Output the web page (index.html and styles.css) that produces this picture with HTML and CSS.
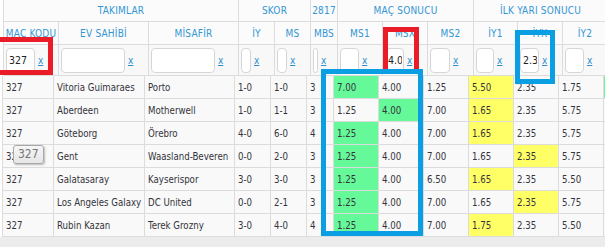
FILE: index.html
```html
<!DOCTYPE html>
<html lang="tr">
<head>
<meta charset="utf-8">
<title>Bülten</title>
<link rel="stylesheet" href="styles.css">
</head>
<body>
<div class="page">
  <div class="head">
    <div class="hc g1 span3">TAKIMLAR</div>
    <div class="hc g1 span2">SKOR</div>
    <div class="hc g1">2817</div>
    <div class="hc g1 span3">MAÇ SONUCU</div>
    <div class="hc g1 span3">İLK YARI SONUCU</div>
    <div class="hc g1"></div>

    <div class="hc g2">MAÇ KODU</div>
    <div class="hc g2">EV SAHİBİ</div>
    <div class="hc g2">MİSAFİR</div>
    <div class="hc g2">İY</div>
    <div class="hc g2">MS</div>
    <div class="hc g2">MBS</div>
    <div class="hc g2">MS1</div>
    <div class="hc g2">MSX</div>
    <div class="hc g2">MS2</div>
    <div class="hc g2">İY1</div>
    <div class="hc g2">İYX</div>
    <div class="hc g2">İY2</div>
    <div class="hc g2"></div>

    <div class="fc"><input class="fi" value="327"><a class="clr">x</a></div>
    <div class="fc"><input class="fi" value=""><a class="clr">x</a></div>
    <div class="fc"><input class="fi" value=""><a class="clr">x</a></div>
    <div class="fc"><input class="fi" value=""><a class="clr">x</a></div>
    <div class="fc"><input class="fi" value=""><a class="clr">x</a></div>
    <div class="fc"><input class="fi" value=""><a class="clr">x</a></div>
    <div class="fc"><input class="fi" value=""><a class="clr">x</a></div>
    <div class="fc"><input class="fi" value="4.0"><a class="clr">x</a></div>
    <div class="fc"><input class="fi" value=""><a class="clr">x</a></div>
    <div class="fc"><input class="fi" value=""><a class="clr">x</a></div>
    <div class="fc"><input class="fi" value="2.3"><a class="clr">x</a></div>
    <div class="fc"><input class="fi" value=""><a class="clr">x</a></div>
    <div class="fc"></div>
  </div>

  <div class="body">
    <div class="dc">327</div><div class="dc">Vitoria Guimaraes</div><div class="dc">Porto</div><div class="dc">1-0</div><div class="dc">1-0</div><div class="dc">3</div><div class="dc green">7.00</div><div class="dc">4.00</div><div class="dc">1.25</div><div class="dc yellow">5.50</div><div class="dc">2.35</div><div class="dc">1.75</div><div class="dc green"></div>
    <div class="dc">327</div><div class="dc">Aberdeen</div><div class="dc">Motherwell</div><div class="dc">1-0</div><div class="dc">1-1</div><div class="dc">3</div><div class="dc">1.25</div><div class="dc green">4.00</div><div class="dc">7.00</div><div class="dc yellow">1.65</div><div class="dc">2.35</div><div class="dc">5.75</div><div class="dc"></div>
    <div class="dc">327</div><div class="dc">Göteborg</div><div class="dc">Örebro</div><div class="dc">4-0</div><div class="dc">6-0</div><div class="dc">4</div><div class="dc green">1.25</div><div class="dc">4.00</div><div class="dc">7.00</div><div class="dc yellow">1.65</div><div class="dc">2.35</div><div class="dc">5.75</div><div class="dc"></div>
    <div class="dc">327</div><div class="dc">Gent</div><div class="dc">Waasland-Beveren</div><div class="dc">0-0</div><div class="dc">2-0</div><div class="dc">3</div><div class="dc green">1.25</div><div class="dc">4.00</div><div class="dc">7.00</div><div class="dc">1.65</div><div class="dc yellow">2.35</div><div class="dc">5.75</div><div class="dc"></div>
    <div class="dc">327</div><div class="dc">Galatasaray</div><div class="dc">Kayserispor</div><div class="dc">3-0</div><div class="dc">3-0</div><div class="dc">3</div><div class="dc green">1.25</div><div class="dc">4.00</div><div class="dc">6.50</div><div class="dc yellow">1.65</div><div class="dc">2.35</div><div class="dc">5.50</div><div class="dc"></div>
    <div class="dc">327</div><div class="dc">Los Angeles Galaxy</div><div class="dc">DC United</div><div class="dc">0-0</div><div class="dc">2-1</div><div class="dc">3</div><div class="dc green">1.25</div><div class="dc">4.00</div><div class="dc">7.00</div><div class="dc">1.65</div><div class="dc yellow">2.35</div><div class="dc">5.75</div><div class="dc"></div>
    <div class="dc">327</div><div class="dc">Rubin Kazan</div><div class="dc">Terek Grozny</div><div class="dc">3-0</div><div class="dc">4-0</div><div class="dc">4</div><div class="dc green">1.25</div><div class="dc">4.00</div><div class="dc">7.00</div><div class="dc yellow">1.75</div><div class="dc">2.35</div><div class="dc">5.50</div><div class="dc"></div>
  </div>
  <div class="foot"></div>

  <div class="tooltip">327</div>
  <div class="mark red r1"></div>
  <div class="mark red r2"></div>
  <div class="mark blue b1"></div>
  <div class="mark blue b2"></div>
</div>
</body>
</html>
```

FILE: styles.css
```css
html, body {
  margin: 0;
  padding: 0;
  background: #ffffff;
}
.page {
  position: relative;
  width: 605px;
  height: 247px;
  overflow: hidden;
  font-family: "DejaVu Sans Condensed", "DejaVu Sans", sans-serif;
  font-stretch: condensed;
  font-size: 10px;
  color: #333;
}
.head {
  display: grid;
  grid-template-columns: 55px 90px 90px 36px 36px 27px 45px 45px 46px 44px 45px 45px 45px;
  grid-template-rows: 22px 23px 31px;
  margin-left: 3px;
  width: 700px;
  border-left: 1px solid #dcdcdc;
  background: #fbfbfb;
}
.hc {
  box-sizing: border-box;
  border-right: 1px solid #dcdcdc;
  border-bottom: 1px solid #dcdcdc;
  color: #3296d4;
  display: flex;
  align-items: center;
  justify-content: center;
  letter-spacing: 0.2px;
  white-space: nowrap;
}
.span3 { grid-column: span 3; }
.span2 { grid-column: span 2; }
.fc {
  box-sizing: border-box;
  border-right: 1px solid #dcdcdc;
  border-bottom: 1px solid #dcdcdc;
  display: flex;
  align-items: center;
  gap: 3px;
  padding: 0 14px 0 2px;
  background: #f8f8f8;
}
.fi {
  box-sizing: border-box;
  flex: 1 1 auto;
  min-width: 0;
  width: 10px;
  height: 25px;
  margin: 0;
  padding: 0 1px 0 2px;
  border: 1px solid #d6d6d6;
  border-radius: 4px;
  background: #fff;
  font-family: "DejaVu Sans Condensed", "DejaVu Sans", sans-serif;
  font-stretch: condensed;
  font-size: 10.5px;
  color: #222;
}
.clr {
  color: #2f8fd0;
  text-decoration: underline;
  font-size: 10px;
  width: 6px;
  flex: none;
}
.body {
  display: grid;
  grid-template-columns: 51px 91px 90px 36px 36px 27px 45px 45px 45px 45px 45px 45px 45px;
  grid-auto-rows: 23px;
  margin-left: 2px;
  width: 700px;
  border-left: 1px solid #dcdcdc;
  background: #f9f9f9;
}
.dc {
  box-sizing: border-box;
  border-right: 1px solid #dcdcdc;
  border-bottom: 1px solid #dcdcdc;
  display: flex;
  align-items: center;
  padding: 0 3px;
  white-space: nowrap;
  overflow: hidden;
  color: #34343c;
  font-size: 9.6px;
}
.green { background: #66f999; }
.yellow { background: #ffff66; }
.foot {
  height: 12px;
  background: #ececec;
}
.tooltip {
  position: absolute;
  left: 13px;
  top: 145px;
  width: 31px;
  height: 19px;
  box-sizing: border-box;
  border: 1px solid #a8a8a8;
  border-radius: 3px;
  background: linear-gradient(#f6f6f6, #e6e6e6);
  box-shadow: 1px 1px 2px rgba(0,0,0,0.25);
  color: #777;
  font-size: 12px;
  line-height: 17px;
  padding-left: 4px;
}
.mark {
  position: absolute;
  box-sizing: border-box;
  border: 5px solid;
  pointer-events: none;
}
.red { border-color: #ea1c27; }
.blue { border-color: #0a9fe3; }
.r1 { left: -10px; top: 37px; width: 63px; height: 38px; }
.r2 { left: 383px; top: 27px; width: 36px; height: 47px; }
.b1 { left: 321px; top: 69px; width: 102px; height: 167px; }
.b2 { left: 515px; top: 30px; width: 40px; height: 54px; }
```
